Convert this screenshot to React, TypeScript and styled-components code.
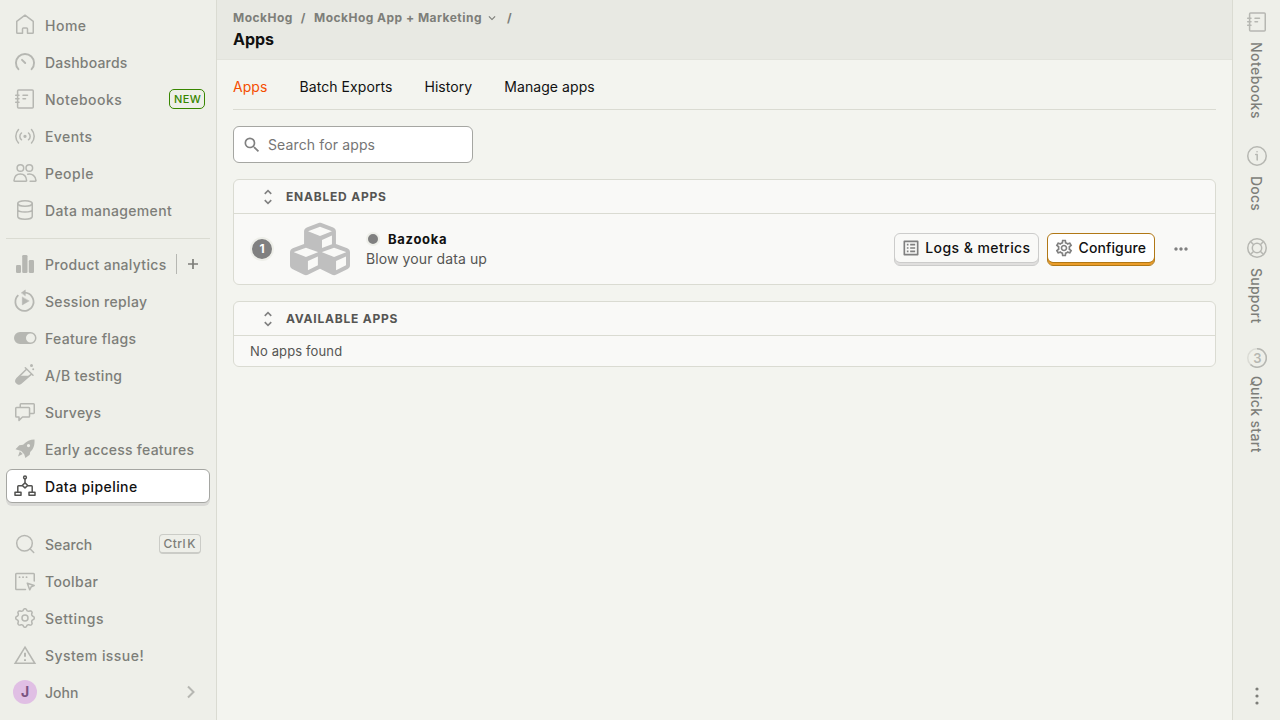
import React from 'react';
import styled, { createGlobalStyle, css } from 'styled-components';
import { FaCubes } from 'react-icons/fa';
import {
  MdExpandMore,
  MdMoreHoriz,
  MdOutlineListAlt,
  MdOutlineSettings,
  MdSearch,
  MdUnfoldMore,
} from 'react-icons/md';

const GlobalStyle = createGlobalStyle`
  *, *::before, *::after { box-sizing: border-box; }
  body {
    margin: 0;
    background: #f3f4ef;
    color: #111;
    font-family: Inter, "Liberation Sans", sans-serif;
    font-size: 14px;
    line-height: 20px;
  }
  ul { list-style: none; margin: 0; padding: 0; }
  button { font: inherit; color: inherit; margin: 0; }
`;

const muted = '#7d7e79';
const border = '#dadbd2';

const Shell = styled.div`
  display: flex;
  height: 720px;
  overflow: hidden;
`;

/* Left navigation */
const Nav = styled.nav`
  display: flex;
  flex-direction: column;
  justify-content: space-between;
  width: 217px;
  padding: 8px 6px;
  background: #eeefe9;
  border-right: 1px solid ${border};
`;
const NavRow = styled.li`
  height: 37px;
  padding-bottom: 3px;
`;
const NavButton = styled.div<{ $active?: boolean }>`
  display: flex;
  align-items: center;
  height: 34px;
  padding: 0 8px 0 7px;
  font-weight: 500;
  color: ${muted};
  svg { color: #b6b7b2; flex: none; }
  ${(p) =>
    p.$active &&
    css`
      padding: 0 7px 0 6px;
      color: #111;
      background: #fff;
      border: 1px solid #a5a6a2;
      border-radius: 6px;
      box-shadow: 0 3px 0 0 #d9d9d6;
      svg { color: #525250; }
    `}
`;
const NavLabel = styled.span<{ $track: number }>`
  flex: 1;
  padding-top: 1px;
  margin-left: 8px;
  letter-spacing: ${(p) => p.$track}px;
  white-space: nowrap;
`;
const NavDivider = styled.li`
  height: 1px;
  margin: 8px 0;
  background: ${border};
`;
const NewTag = styled.span`
  height: 20px;
  margin-right: -3px;
  padding: 0 3px 0 4px;
  font-size: 11px;
  line-height: 19px;
  letter-spacing: 0.3px;
  color: #388600;
  border: 1px solid #388600;
  border-radius: 5px;
`;
const AddAction = styled.span`
  display: flex;
  align-items: center;
  justify-content: center;
  width: 26px;
  height: 20px;
  padding-left: 6px;
  border-left: 1px solid #b6b7b2;
  && svg { color: #7d7e79; }
`;
const Shortcut = styled.kbd`
  height: 20px;
  margin-right: 1px;
  padding: 0 4px;
  font: 500 12px/17px Inter, sans-serif;
  letter-spacing: 0.4px;
  word-spacing: -2.2px;
  border: 1px solid #cbccc7;
  border-bottom-width: 2px;
  border-radius: 4px;
`;
const Avatar = styled.span`
  width: 24px;
  height: 24px;
  border-radius: 50%;
  background: #e0bfe4;
  color: #7b5380;
  font-weight: 700;
  line-height: 24px;
  text-align: center;
`;

/* Main column */
const Main = styled.main`
  flex: 1;
  min-width: 0;
`;
const Header = styled.header`
  height: 60px;
  padding: 9px 16px 0;
  background: #e8e9e3;
  border-bottom: 1px solid #e2e3dc;
`;
const Breadcrumbs = styled.div`
  display: flex;
  align-items: center;
  gap: 8px;
  height: 18px;
  font-size: 12px;
  font-weight: 700;
  letter-spacing: 0.48px;
  color: ${muted};
`;
const Crumb = styled.span`
  display: flex;
  align-items: center;
  gap: 3px;
`;
const Title = styled.h1`
  margin: 2px 0 0;
  font-size: 16px;
  line-height: 20px;
  font-weight: 700;
`;
const Content = styled.div`
  padding: 0 16px;
`;
const Tabs = styled.ul`
  display: flex;
  gap: 32px;
  height: 50px;
  padding-top: 17px;
  letter-spacing: 0.07px;
  border-bottom: 1px solid ${border};
`;
const Tab = styled.li<{ $active?: boolean }>`
  color: ${(p) => (p.$active ? '#f54e00' : '#111')};
`;
const SearchBox = styled.label`
  display: flex;
  align-items: center;
  gap: 6px;
  width: 240px;
  height: 37px;
  margin-top: 16px;
  padding-left: 8px;
  background: #fff;
  border: 1px solid #a5a6a2;
  border-radius: 6px;
  svg { color: #808080; }
  input {
    flex: 1;
    min-width: 0;
    padding: 0;
    border: 0;
    outline: 0;
    background: none;
    font: inherit;
    letter-spacing: 0.13px;
  }
  input::placeholder { color: #757575; opacity: 1; }
`;
const Panel = styled.section`
  margin-top: 16px;
  background: #f9f9f7;
  border: 1px solid ${border};
  border-radius: 6px;
`;
const PanelHead = styled.h2`
  display: flex;
  align-items: center;
  gap: 8px;
  height: 34px;
  margin: 0;
  padding-left: 24px;
  font-size: 12px;
  font-weight: 700;
  letter-spacing: 0.78px;
  text-transform: uppercase;
  color: #555553;
  border-bottom: 1px solid ${border};
  svg { color: #808080; }
`;
const AppRow = styled.div`
  display: flex;
  align-items: center;
  height: 70px;
  padding: 0 24px 0 16px;
`;
const OrderBadge = styled.span`
  width: 24px;
  height: 24px;
  border: 2px solid #eeefe9;
  border-radius: 50%;
  background: #808080;
  color: #fff;
  font-size: 12px;
  font-weight: 700;
  line-height: 20px;
  text-align: center;
`;
const AppLogo = styled(FaCubes)`
  margin-left: 16px;
  color: #bfbfbf;
`;
const AppInfo = styled.div`
  flex: 1;
  margin-left: 16px;
  padding-bottom: 2px;
`;
const AppName = styled.div`
  display: flex;
  align-items: center;
  height: 20px;
  font-size: 13px;
  font-weight: 700;
  letter-spacing: 0.7px;
`;
const StatusDot = styled.span`
  width: 14px;
  height: 14px;
  margin-right: 8px;
  border: 2px solid #eeefe9;
  border-radius: 50%;
  background: #808080;
`;
const AppDescription = styled.div`
  height: 19px;
  line-height: 19px;
  letter-spacing: 0.1px;
  color: #555553;
`;
const ActionButton = styled.button<{ $primary?: boolean }>`
  display: flex;
  align-items: center;
  gap: ${(p) => (p.$primary ? 5 : 4)}px;
  height: 33px;
  margin-right: 8px;
  padding: 0 ${(p) => (p.$primary ? 8 : 7)}px 3px 6px;
  font-weight: 500;
  letter-spacing: ${(p) => (p.$primary ? 0.1 : 0.43)}px;
  white-space: nowrap;
  background: ${(p) => (p.$primary ? '#fff' : '#f9f9f7')};
  border: 1px solid ${(p) => (p.$primary ? '#b17816' : '#cccccb')};
  border-radius: 6px;
  box-shadow: inset 0 -2px 0 ${(p) => (p.$primary ? '#eb9d2a' : '#e0dfde')},
    inset 0 -3px 0 ${(p) => (p.$primary ? '#b17816' : '#cccccb')};
  svg { color: #808080; }
`;
const MoreButton = styled.button`
  display: flex;
  margin-left: 8px;
  padding: 0;
  background: none;
  border: 0;
  color: #808080;
`;
const EmptyRow = styled.div`
  height: 30px;
  padding-left: 16px;
  font-size: 13px;
  line-height: 31px;
  letter-spacing: 0.13px;
  color: #555553;
`;

/* Right rail */
const Rail = styled.aside`
  display: flex;
  flex-direction: column;
  justify-content: space-between;
  align-items: center;
  width: 48px;
  padding: 10px 0 12px 1px;
  background: #eeefe9;
  border-left: 1px solid ${border};
  color: ${muted};
  svg { color: #b6b7b2; }
`;
const RailTabs = styled.ul`
  display: flex;
  flex-direction: column;
  gap: 25px;
`;
const RailTab = styled.li`
  display: flex;
  flex-direction: column;
  align-items: center;
  gap: 8px;
  font-weight: 500;
`;
const RailLabel = styled.span<{ $track: number }>`
  writing-mode: vertical-rl;
  line-height: 20px;
  margin-right: 2px;
  letter-spacing: ${(p) => p.$track}px;
`;
const ProgressText = styled.text`
  font: 600 13px Inter, sans-serif;
  fill: #b6b7b2;
  text-anchor: middle;
`;

const Icon = ({ children, w = 1.5 }: { children: React.ReactNode; w?: number }) => (
  <svg width="24" height="24" viewBox="0 0 24 24" fill="none" stroke="currentColor" strokeWidth={w} strokeLinecap="round" strokeLinejoin="round">
    {children}
  </svg>
);

/* Outline of an eight-toothed gear centred in a 24px box */
const gearPoints = Array.from({ length: 96 }, (_, i) => {
  const angle = (i / 96) * Math.PI * 2;
  const wave = Math.tanh(1.6 * Math.cos(8 * angle)) / Math.tanh(1.6);
  const r = 8.35 + 0.9 * wave;
  return `${(12 + r * Math.sin(angle)).toFixed(2)},${(12 - r * Math.cos(angle)).toFixed(2)}`;
}).join(' ');

const icons = {
  home: <Icon><path d="M3.75 8.4 12 2.2l8.25 6.2v11.1a.75.75 0 0 1-.75.75h-5V16a1 1 0 0 0-1-1h-3a1 1 0 0 0-1 1v4.25h-5a.75.75 0 0 1-.75-.75z" /></Icon>,
  dashboard: <Icon w={1.9}><path d="M5.4 19.2a9.05 9.05 0 1 1 13.2 0" /><path d="m9 9.8 3.2 3.2" /></Icon>,
  notebook: <Icon><rect x="4.6" y="3" width="15.65" height="18" rx="1" /><path d="M2.7 8.3h3.3M2.7 11.7h3.3M2.7 15.2h3.3M10 8.3h4.5M10 11.7h2.5" /></Icon>,
  events: <Icon><path d="M5.5 5.5c-3.6 4-3.6 9.5 0 13.5M18.500 5.500c3.600 4 3.600 9.500 0 13.500M8.500 9c-2.200 2-2.200 4.800 0 6.800M15.500 9c2.200 2 2.200 4.800 0 6.800" /><circle cx="12" cy="12.3" r=".9" fill="currentColor" /></Icon>,
  people: <Icon><circle cx="7.4" cy="7" r="3.3" /><circle cx="16.3" cy="7" r="3.3" /><path d="M1.600 20.250a.6.6 0 0 1-.6-.7c.4-4 2.700-6.600 6.300-6.600s6 2.600 6.300 6.600a.6.6 0 0 1-.6.7zM14.700 13.200c4.500-1 8 2 8.300 6.400a.6.6 0 0 1-.6.650h-5.300" /></Icon>,
  data: <Icon><ellipse cx="12" cy="5.5" rx="7.25" ry="2.75" /><path d="M4.750 5.500v13c0 1.500 3.200 2.750 7.250 2.750s7.250-1.250 7.250-2.750v-13M4.750 11.500c0 1.500 3.200 2.500 7.250 2.500s7.250-1 7.250-2.500" /></Icon>,
  analytics: <Icon><g fill="currentColor" stroke="none"><rect x="3" y="13" width="5" height="8" rx="1.3" /><rect x="9.2" y="3" width="5.3" height="18" rx="1.3" /><rect x="15.8" y="8" width="5.2" height="13" rx="1.3" /></g></Icon>,
  replay: <Icon><path strokeWidth="1.8" strokeLinecap="butt" d="M5.300 6.100A9.100 9.100 0 1 0 12 3.700h-1.500" /><path d="M8.500 3.700 12.300.9v5.600z M9.300 8.300v7.600l6.600-3.800z" fill="currentColor" strokeWidth=".5" /></Icon>,
  toggle: <Icon><path d="M7 6h10.500a6 6 0 0 1 0 12H7A6 6 0 0 1 7 6zm10.500 1.500a4.500 4.500 0 1 0 0 9 4.500 4.500 0 0 0 0-9z" fill="currentColor" fillRule="evenodd" stroke="none" /></Icon>,
  flask: <Icon><path d="M12.300 4.700 20 12.200M13.700 6 3.700 15.900a3.050 3.050 0 0 0 4.300 4.300L18.700 10.900" /><path d="M6.800 12.800h9.700L8 20.300a3.050 3.050 0 0 1-4.300-4.300z" fill="currentColor" stroke="none" /><circle cx="18.5" cy="2.5" r="1.5" fill="currentColor" stroke="none" /><circle cx="20.2" cy="6.2" r="1" fill="currentColor" stroke="none" /></Icon>,
  surveys: <Icon><path d="M3.500 7.500h12.300a.75.75 0 0 1 .75.75v8a.75.75 0 0 1-.75.75H9.500L6 20.400V17H3.500a.75.75 0 0 1-.75-.75v-8a.75.75 0 0 1 .75-.75zM7.250 7V4.500A.75.75 0 0 1 8 3.750h12.500a.75.75 0 0 1 .75.75v8.300a.75.75 0 0 1-.75.75H17" /></Icon>,
  rocket: <Icon><path d="M21.500 2.500c.3 5.500-.7 9.300-4.300 12.500l-.5 2.700-4.300 3.300-1.200-3.700-3-3.200-5.700-1.900 3.800-4 3.800-.5C13.500 4.200 17 2.500 21.500 2.500zm-6 4.500a1.600 1.600 0 1 0 0 3.200 1.600 1.600 0 0 0 0-3.200zM6.800 14.200l2.900 2.900-4.700 2.400z" fill="currentColor" fillRule="evenodd" stroke="none" /></Icon>,
  pipeline: <Icon><circle cx="12" cy="3.5" r="1.4" /><path d="M12 5v3.500M4.800 18v-5.500a.75.75 0 0 1 .75-.75H9M19.200 18v-5.500a.75.75 0 0 0-.75-.75H15M9.200 11.500 12 8.900l2.800 2.600-2.800 2.400z" /><path d="M2 18.250h6v3H2zM16 18.250h6v3h-6z" /></Icon>,
  search: <Icon><circle cx="11.5" cy="11.3" r="7.8" /><path d="m17 16.800 3.700 3.700" /></Icon>,
  toolbar: <Icon><path d="M21.250 12V5.200a.75.75 0 0 0-.75-.75h-17a.75.75 0 0 0-.75.75v14.600c0 .4.300.75.750.75H12.500M14.300 14.200l6.900 2.300-3 1.300-1.500 3z" /><path d="M6.500 8.200h.1M10 8.200h.1M13.500 8.200h.1" strokeWidth="1.8" /></Icon>,
  gear: <Icon><polygon points={gearPoints} /><circle cx="12" cy="12" r="3" /></Icon>,
  warning: <Icon w={1.6}><path strokeLinejoin="miter" d="M12 4.200 21.800 20.250H2.200z" /><path d="M12 9.800v3.900M12 16.200v1.800" strokeWidth="2" strokeLinecap="butt" /></Icon>,
  info: <Icon><circle cx="12" cy="12" r="9.25" /><path d="M10.700 10.500h1.500V16M12 7.800h.1" /></Icon>,
  support: <Icon><circle cx="12" cy="12" r="9.25" /><circle cx="12" cy="12" r="4.7" /><path d="m5.500 5.500 3.200 3.200M18.500 5.500l-3.200 3.200M5.500 18.500l3.200-3.200M18.500 18.500l-3.200-3.200" /></Icon>,
};

const ProgressIcon = () => (
  <svg width="20" height="20" viewBox="2 2 20 20" fill="none" stroke="currentColor" strokeWidth="1.5">
    <circle cx="12" cy="12" r="9.25" opacity=".35" />
    <path d="M12 2.750a9.250 9.250 0 1 1-6.500 15.800" />
    <g stroke="none"><ProgressText x="12.5" y="16.5">3</ProgressText></g>
  </svg>
);

interface NavEntry {
  icon: React.ReactNode;
  label: string;
  track: number;
  active?: boolean;
  side?: React.ReactNode;
}

const projectItems: NavEntry[] = [
  { icon: icons.home, label: 'Home', track: 0.5 },
  { icon: icons.dashboard, label: 'Dashboards', track: 0.2 },
  { icon: icons.notebook, label: 'Notebooks', track: 0.5, side: <NewTag>NEW</NewTag> },
  { icon: icons.events, label: 'Events', track: 0.4 },
  { icon: icons.people, label: 'People', track: 0.5 },
  { icon: icons.data, label: 'Data management', track: 0.33 },
];

const productItems: NavEntry[] = [
  {
    icon: icons.analytics,
    label: 'Product analytics',
    track: 0.3,
    side: (
      <AddAction>
        <svg width="12" height="12" viewBox="0 0 12 12" stroke="currentColor" strokeWidth="1.7"><path d="M6 1v10M1 6h10" /></svg>
      </AddAction>
    ),
  },
  { icon: icons.replay, label: 'Session replay', track: 0.32 },
  { icon: icons.toggle, label: 'Feature flags', track: 0.3 },
  { icon: icons.flask, label: 'A/B testing', track: 0.3 },
  { icon: icons.surveys, label: 'Surveys', track: 0.25 },
  { icon: icons.rocket, label: 'Early access features', track: 0.25 },
  { icon: icons.pipeline, label: 'Data pipeline', track: 0.4, active: true },
];

const accountItems: NavEntry[] = [
  { icon: icons.search, label: 'Search', track: 0.05, side: <Shortcut>Ctrl K</Shortcut> },
  { icon: icons.toolbar, label: 'Toolbar', track: 0.38 },
  { icon: icons.gear, label: 'Settings', track: 0.55 },
  { icon: icons.warning, label: 'System issue!', track: 0.46 },
  {
    icon: <Avatar>J</Avatar>,
    label: 'John',
    track: 0.05,
    side: (
      <svg width="22" height="14" viewBox="0 0 22 14" fill="none" stroke="currentColor" strokeWidth="2"><path d="m8 1.500 5.500 5.500L8 12.500" /></svg>
    ),
  },
];

const NavItem = ({ icon, label, track, active, side }: NavEntry) => (
  <NavRow>
    <NavButton $active={active}>
      {icon}
      <NavLabel $track={track}>{label}</NavLabel>
      {side}
    </NavButton>
  </NavRow>
);

export default function App() {
  return (
    <>
      <GlobalStyle />
      <Shell>
        <Nav>
          <ul>
            {projectItems.map((item) => <NavItem key={item.label} {...item} />)}
            <NavDivider />
            {productItems.map((item) => <NavItem key={item.label} {...item} />)}
          </ul>
          <ul>{accountItems.map((item) => <NavItem key={item.label} {...item} />)}</ul>
        </Nav>

        <Main>
          <Header>
            <Breadcrumbs>
              <Crumb>MockHog</Crumb>
              <span>/</span>
              <Crumb>MockHog App + Marketing <MdExpandMore size={14} /></Crumb>
              <span>/</span>
            </Breadcrumbs>
            <Title>Apps</Title>
          </Header>
          <Content>
            <Tabs>
              <Tab $active>Apps</Tab>
              <Tab>Batch Exports</Tab>
              <Tab>History</Tab>
              <Tab>Manage apps</Tab>
            </Tabs>
            <SearchBox>
              <MdSearch size={20} />
              <input placeholder="Search for apps" />
            </SearchBox>
            <Panel>
              <PanelHead><MdUnfoldMore size={20} />Enabled apps</PanelHead>
              <AppRow>
                <OrderBadge>1</OrderBadge>
                <AppLogo size={60} />
                <AppInfo>
                  <AppName><StatusDot />Bazooka</AppName>
                  <AppDescription>Blow your data up</AppDescription>
                </AppInfo>
                <ActionButton><MdOutlineListAlt size={20} />Logs &amp; metrics</ActionButton>
                <ActionButton $primary><MdOutlineSettings size={20} />Configure</ActionButton>
                <MoreButton><MdMoreHoriz size={20} /></MoreButton>
              </AppRow>
            </Panel>
            <Panel>
              <PanelHead><MdUnfoldMore size={20} />Available apps</PanelHead>
              <EmptyRow>No apps found</EmptyRow>
            </Panel>
          </Content>
        </Main>

        <Rail>
          <RailTabs>
            <RailTab>{icons.notebook}<RailLabel $track={0.45}>Notebooks</RailLabel></RailTab>
            <RailTab>{icons.info}<RailLabel $track={0.2}>Docs</RailLabel></RailTab>
            <RailTab>{icons.support}<RailLabel $track={0.25}>Support</RailLabel></RailTab>
            <RailTab><ProgressIcon /><RailLabel $track={0.35}>Quick start</RailLabel></RailTab>
          </RailTabs>
          <svg width="24" height="24" viewBox="0 0 24 24" fill="#7d7e79"><circle cx="12" cy="5" r="1.6" /><circle cx="12" cy="12" r="1.6" /><circle cx="12" cy="19" r="1.6" /></svg>
        </Rail>
      </Shell>
    </>
  );
}
